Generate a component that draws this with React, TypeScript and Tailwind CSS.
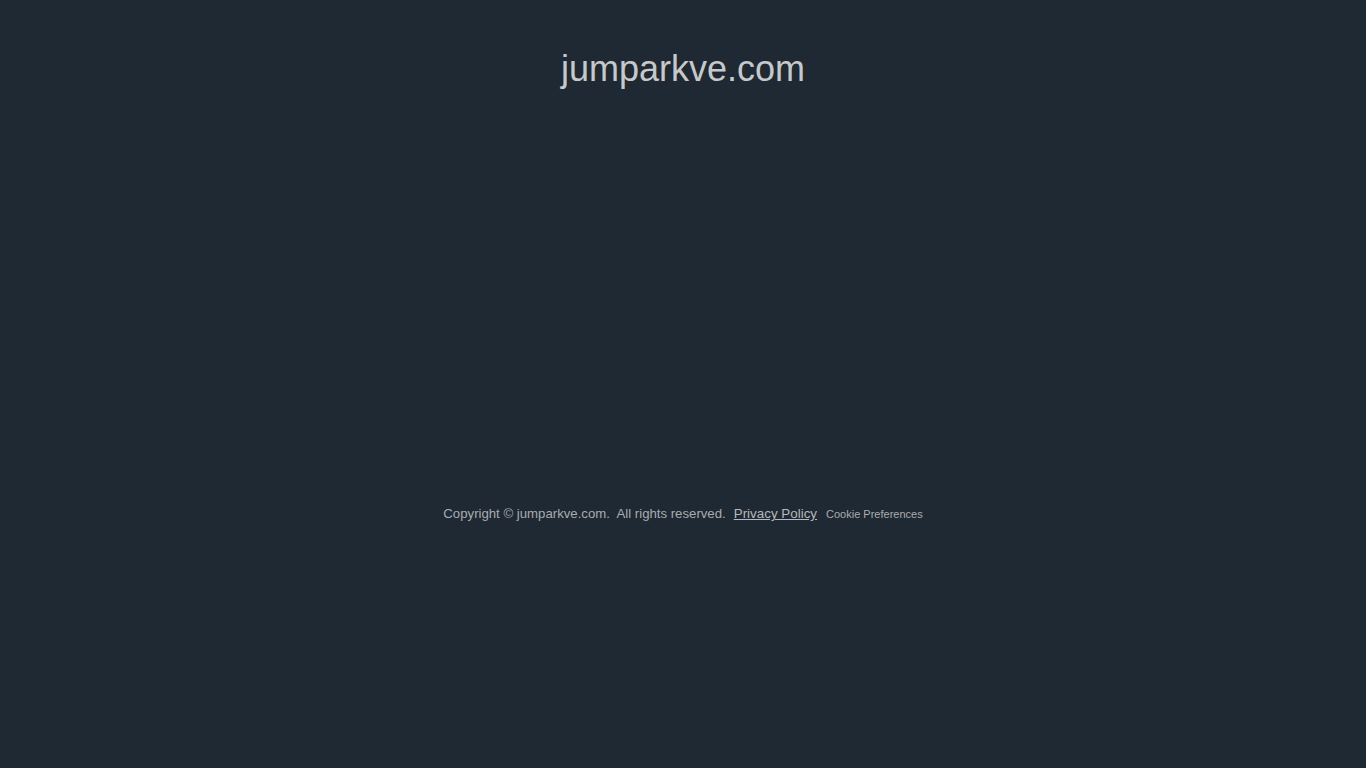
export default function App() {
  return (
    <div className="min-h-[768px] bg-[#1e2933] flex flex-col items-center font-['Liberation_Sans',Arial,sans-serif]">
      <h1 className="mt-[47px] text-[36px] leading-[44px] text-[#c8c8c8]">jumparkve.com</h1>
      <div className="mt-[413px] flex items-baseline text-[13.2px] text-[#a9acaf]">
        <span>Copyright © jumparkve.com.&nbsp; All rights reserved.</span>
        <a className="ml-2 text-[13.4px] underline text-[#b6b8ba]" href="#">Privacy Policy</a>
        <a className="ml-[9px] text-[11px] text-[#a9acaf]" href="#">Cookie Preferences</a>
      </div>
    </div>
  );
}
